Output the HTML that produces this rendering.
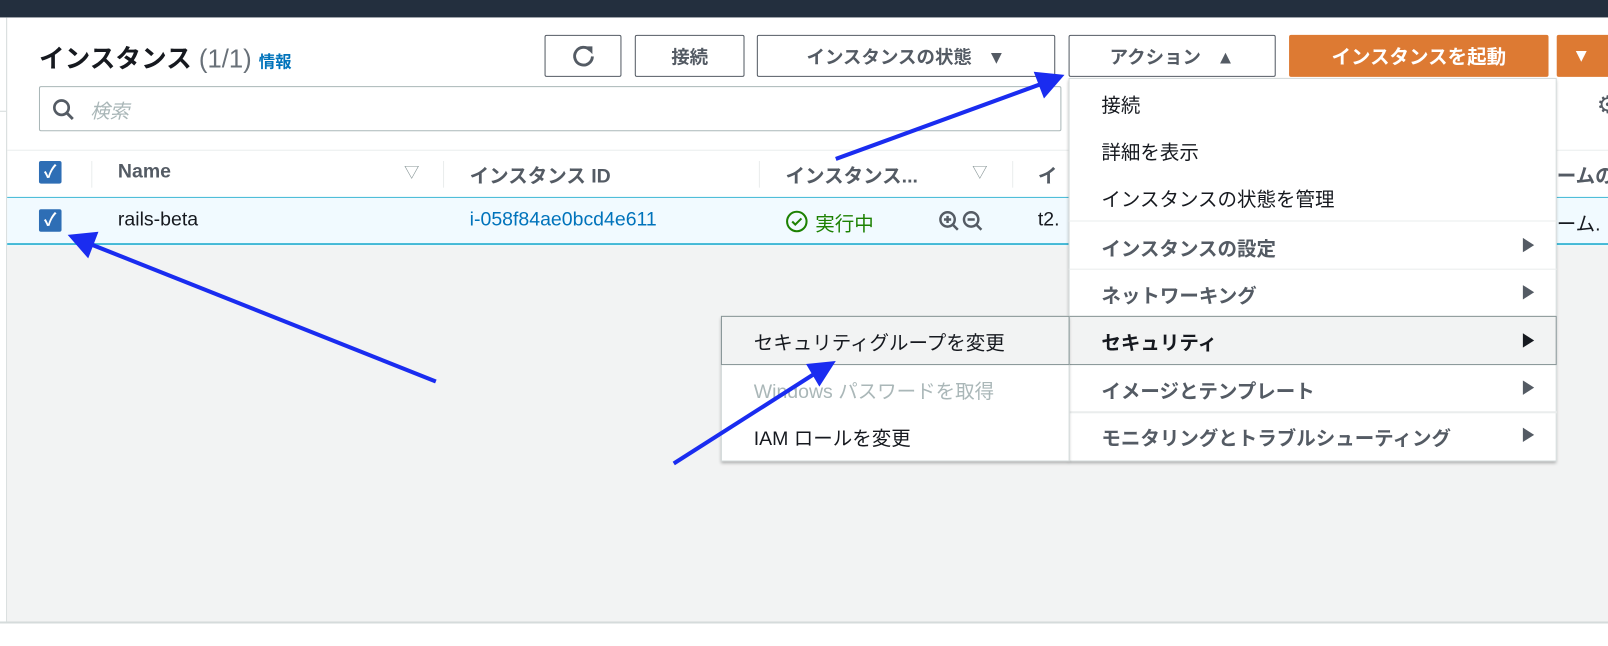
<!DOCTYPE html>
<html><head><meta charset="utf-8"><style>
*{box-sizing:border-box;margin:0;padding:0}
html,body{width:1608px;height:630px;overflow:hidden;background:#fff}
#w{position:absolute;left:0;top:0;width:1568px;height:615px;transform:scale(1.02551);transform-origin:0 0;font-family:"Liberation Sans","Noto Sans CJK JP",sans-serif;color:#16191f}
.a{position:absolute}
.btn{position:absolute;top:34px;height:41px;border:1px solid #545b64;border-radius:2px;background:#fff;color:#545b64;font-weight:bold;font-size:18px;display:flex;align-items:center;justify-content:center}
.t{position:absolute;font-size:19px;white-space:nowrap}
.mi{position:absolute;left:1074px;font-size:19px;color:#16191f;white-space:nowrap}
.mb{font-weight:bold;color:#545b64}
.tri{position:absolute;left:1485px;width:0;height:0;border-top:7px solid transparent;border-bottom:7px solid transparent;border-left:11px solid #545b64}
</style></head><body><div id="w">
<div class="a" style="left:0;top:0;width:1568px;height:17px;background:#232f3e"></div>
<div class="a" style="left:6px;top:17px;width:1px;height:590px;background:#d5dbdb"></div>
<div class="a" style="left:0;top:108px;width:6px;height:1px;background:#d5dbdb"></div>
<div class="t" style="left:38px;top:38px;font-size:25px;font-weight:bold">インスタンス <span style="font-weight:normal;color:#687078">(1/1)</span> <span style="font-size:16px;color:#0073bb;font-weight:bold">情報</span></div>
<div class="btn" style="left:531px;width:75px"><svg width="26" height="26" viewBox="0 0 24 24"><path d="M18 6.5A8 8 0 1 0 20 12" fill="none" stroke="#545b64" stroke-width="2.6"/><path d="M13 3h7v7z" fill="#545b64"/></svg></div>
<div class="btn" style="left:619px;width:107px">接続</div>
<div class="btn" style="left:738px;width:291px">インスタンスの状態 &nbsp;&nbsp;▼</div>
<div class="btn" style="left:1042px;width:202px">アクション &nbsp;&nbsp;▲</div>
<div class="btn" style="left:1257px;width:253px;background:#dd7a33;border-color:#dd7a33;color:#fff;font-size:19px">インスタンスを起動</div>
<div class="btn" style="left:1518px;width:100px;background:#dd7a33;border-color:#dd7a33;color:#fff;justify-content:flex-start;padding-left:14px">▼</div>
<div class="a" style="left:38px;top:84px;width:997px;height:44px;border:1px solid #aab7b8;border-radius:2px"></div>
<svg class="a" style="left:50px;top:95px" width="24" height="24" viewBox="0 0 24 24"><circle cx="10" cy="10" r="7" fill="none" stroke="#545b64" stroke-width="2.6"/><path d="M15 15l6 6" stroke="#545b64" stroke-width="2.8"/></svg>
<div class="t" style="left:88px;top:94px;color:#aab7b8;font-style:italic">検索</div>
<div class="a" style="left:1557px;top:88px;font-size:24px;color:#545b64">⚙</div>
<div class="a" style="left:7px;top:146px;width:1601px;height:1px;background:#eaeded"></div>
<div class="a" style="left:38px;top:157px;width:22px;height:22px;background:#2e6eb5;border-radius:2px;color:#fff;font-size:17px;text-align:center;line-height:22px;font-weight:bold">✓</div>
<div class="a" style="left:89px;top:157px;width:1px;height:26px;background:#eaeded"></div>
<div class="t" style="left:115px;top:157px;font-weight:bold;color:#545b64">Name</div>
<div class="t" style="left:394px;top:157px;color:#879596;font-size:15px">▽</div>
<div class="a" style="left:432px;top:157px;width:1px;height:26px;background:#eaeded"></div>
<div class="t" style="left:458px;top:157px;font-weight:bold;color:#545b64">インスタンス ID</div>
<div class="a" style="left:740px;top:157px;width:1px;height:26px;background:#eaeded"></div>
<div class="t" style="left:766px;top:157px;font-weight:bold;color:#545b64">インスタンス...</div>
<div class="t" style="left:948px;top:157px;color:#879596;font-size:15px">▽</div>
<div class="a" style="left:987px;top:157px;width:1px;height:26px;background:#eaeded"></div>
<div class="t" style="left:1012px;top:157px;font-weight:bold;color:#545b64">イ</div>
<div class="t" style="left:1518px;top:157px;font-weight:bold;color:#545b64">ームの</div>
<div class="a" style="left:7px;top:192px;width:1601px;height:47px;background:#f1faff;border-top:1px solid #44b9d6;border-bottom:2px solid #44b9d6"></div>
<div class="a" style="left:38px;top:204px;width:22px;height:22px;background:#2e6eb5;border-radius:2px;color:#fff;font-size:17px;text-align:center;line-height:22px;font-weight:bold">✓</div>
<div class="t" style="left:115px;top:204px">rails-beta</div>
<div class="t" style="left:458px;top:204px;color:#0073bb">i-058f84ae0bcd4e611</div>
<svg class="a" style="left:766px;top:205px" width="22" height="22" viewBox="0 0 22 22"><circle cx="11" cy="11" r="9.5" fill="none" stroke="#1d8102" stroke-width="2"/><path d="M6.5 11l3 3 6-6" fill="none" stroke="#1d8102" stroke-width="2"/></svg>
<div class="t" style="left:795px;top:204px;color:#1d8102">実行中</div>
<svg class="a" style="left:914px;top:204px" width="48" height="24" viewBox="0 0 48 24"><g fill="none" stroke="#545b64" stroke-width="2.4"><circle cx="10" cy="10" r="7"/><path d="M15 15l5 5M6.5 10h7M10 6.5v7"/><circle cx="33" cy="10" r="7"/><path d="M38 15l5 5M29.5 10h7"/></g></svg>
<div class="t" style="left:1012px;top:204px">t2.</div>
<div class="t" style="left:1518px;top:204px">ーム.</div>
<div class="a" style="left:7px;top:240px;width:1601px;height:366px;background:#f2f3f3"></div>
<div class="a" style="left:0;top:606px;width:1608px;height:2px;background:#d5dbdb"></div>
<div class="a" style="left:1042px;top:76px;width:476px;height:374px;background:#fff;border:1px solid #d5dbdb;box-shadow:0 2px 3px rgba(0,0,0,.3)"></div>
<div class="mi" style="top:88px">接続</div>
<div class="mi" style="top:134px">詳細を表示</div>
<div class="mi" style="top:180px">インスタンスの状態を管理</div>
<div class="a" style="left:1042px;top:215px;width:476px;height:1px;background:#eaeded"></div>
<div class="mi mb" style="top:228px">インスタンスの設定</div><div class="tri" style="top:232px"></div>
<div class="a" style="left:1042px;top:262px;width:476px;height:1px;background:#eaeded"></div>
<div class="mi mb" style="top:274px">ネットワーキング</div><div class="tri" style="top:278px"></div>
<div class="a" style="left:1042px;top:308px;width:476px;height:48px;background:#f2f3f3;border:1px solid #879596"></div>
<div class="mi" style="top:320px;font-weight:bold">セキュリティ</div><div class="tri" style="top:325px;border-left-color:#16191f"></div>
<div class="mi mb" style="top:367px">イメージとテンプレート</div><div class="tri" style="top:371px"></div>
<div class="a" style="left:1042px;top:401px;width:476px;height:2px;background:#eaeded"></div>
<div class="mi mb" style="top:413px">モニタリングとトラブルシューティング</div><div class="tri" style="top:417px"></div>
<div class="a" style="left:703px;top:308px;width:340px;height:142px;background:#fff;border:1px solid #d5dbdb;box-shadow:0 2px 3px rgba(0,0,0,.3)"></div>
<div class="a" style="left:703px;top:308px;width:340px;height:48px;background:#f2f3f3;border:1px solid #879596"></div>
<div class="t" style="left:735px;top:320px">セキュリティグループを変更</div>
<div class="t" style="left:735px;top:367px;color:#aab7b8">Windows パスワードを取得</div>
<div class="t" style="left:735px;top:413px">IAM ロールを変更</div>
<svg class="a" style="left:0;top:0" width="1608" height="630">
<g stroke="#1a2cf0" stroke-width="4" fill="#1a2cf0">
<line x1="815" y1="155" x2="1015" y2="82"/><polygon points="1038,73 1008,70 1018,96" stroke="none"/>
<line x1="425" y1="372" x2="88" y2="238"/><polygon points="66,229 96,226 86,252" stroke="none"/>
<line x1="657" y1="452" x2="795" y2="364"/><polygon points="815,352 786,355 799,377" stroke="none"/>
</g></svg>
</div></body></html>
